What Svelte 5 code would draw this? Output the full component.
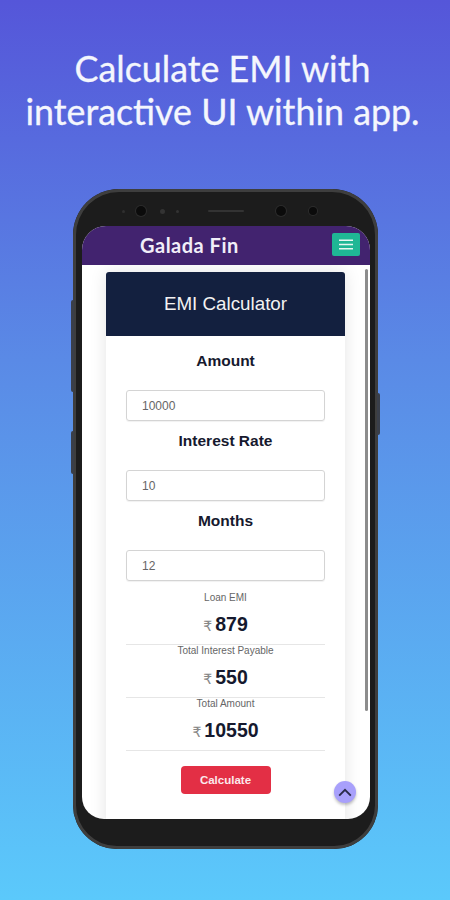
<script>
  const fields = [
    { label: 'Amount', value: '10000' },
    { label: 'Interest Rate', value: '10' },
    { label: 'Months', value: '12' }
  ];
  const results = [
    { label: 'Loan EMI', value: '879' },
    { label: 'Total Interest Payable', value: '550' },
    { label: 'Total Amount', value: '10550' }
  ];
</script>

<div class="page">
  <h1>Calculate EMI with<br />interactive UI within app.</h1>

  <div class="phone">
    <span class="side left-a"></span>
    <span class="side left-b"></span>
    <span class="side right-a"></span>

    <div class="notch">
      <span class="dot tiny"></span>
      <span class="dot cam"></span>
      <span class="dot small"></span>
      <span class="dot tiny2"></span>
      <span class="speaker"></span>
      <span class="dot cam2"></span>
      <span class="dot cam3"></span>
    </div>

    <div class="screen">
      <header class="appbar">
        <span class="brand">Galada Fin</span>
        <button class="menu" aria-label="Menu">
          <svg width="14" height="11" viewBox="0 0 14 11">
            <path d="M0 1.2H14M0 5.5H14M0 9.8H14" stroke="#e6f7f1" stroke-width="1.5" fill="none" />
          </svg>
        </button>
      </header>

      <div class="content">
        <section class="card">
          <div class="card-head">EMI Calculator</div>
          <div class="card-body">
            {#each fields as f}
              <div class="field">
                <div class="field-label">{f.label}</div>
                <div class="input">{f.value}</div>
              </div>
            {/each}

            {#each results as r}
              <div class="result">
                <div class="result-label">{r.label}</div>
                <div class="result-value"><span class="rupee">₹</span>{r.value}</div>
              </div>
            {/each}

            <button class="calc">Calculate</button>
          </div>
        </section>
        <span class="scrollbar"></span>
        <span class="to-top">
          <svg width="14" height="9" viewBox="0 0 14 9">
            <path d="M1.2 7.6L7 1.8L12.8 7.6" stroke="#2b2b4a" stroke-width="1.9" fill="none" />
          </svg>
        </span>
      </div>
    </div>
  </div>
</div>

<style>
  :global(body) {
    margin: 0;
  }
  .page {
    width: 450px;
    height: 900px;
    overflow: hidden;
    box-sizing: border-box;
    padding-top: 47px;
    background: linear-gradient(180deg, #5556d9 0%, #5a8ae6 40%, #5bc9fb 100%);
    font-family: "Liberation Sans", Arial, sans-serif;
  }
  h1 {
    margin: 0;
    height: 142px;
    padding-right: 5px;
    text-align: center;
    color: #f4f6fd;
    font-family: Lato, sans-serif;
    font-weight: 400;
    font-size: 35.8px;
    line-height: 43px;
    -webkit-text-stroke: 0.3px #f4f6fd;
  }
  .phone {
    position: relative;
    width: 305px;
    height: 660px;
    box-sizing: border-box;
    margin-left: 73px;
    background: #1c1c1c;
    border-radius: 46px 46px 44px 44px;
    box-shadow: inset 0 0 0 3px #3e3e3e;
    padding: 0 8.5px 30px;
    display: flex;
    flex-direction: column;
  }
  .side {
    position: absolute;
    width: 3px;
    background: #3a3f4a;
  }
  .left-a { left: -2px; top: 111px; height: 92px; border-radius: 2px 0 0 2px; }
  .left-b { left: -2px; top: 242px; height: 43px; border-radius: 2px 0 0 2px; }
  .right-a { right: -2px; top: 204px; height: 42px; border-radius: 0 2px 2px 0; }
  .notch {
    position: relative;
    height: 37px;
    flex: none;
  }
  .dot {
    position: absolute;
    border-radius: 50%;
    background: #0b0b0b;
  }
  .tiny { left: 40px; top: 21px; width: 3px; height: 3px; background: #2f2f2f; }
  .cam { left: 54.5px; top: 17px; width: 10px; height: 10px; box-shadow: 0 0 0 1px #2c2c2c; }
  .small { left: 78px; top: 20px; width: 5px; height: 5px; background: #333; }
  .tiny2 { left: 94px; top: 21px; width: 3px; height: 3px; background: #333; }
  .speaker {
    position: absolute;
    left: 126.5px;
    top: 21px;
    width: 36px;
    height: 2px;
    background: #333;
    border-radius: 2px;
  }
  .cam2 { left: 194.5px; top: 17px; width: 10px; height: 10px; box-shadow: 0 0 0 1px #2c2c2c; }
  .cam3 { left: 227.5px; top: 18px; width: 8px; height: 8px; box-shadow: 0 0 0 1px #2c2c2c; }
  .screen {
    flex: 1;
    min-height: 0;
    display: flex;
    flex-direction: column;
    background: #fff;
    border-radius: 24px 24px 22px 22px;
    overflow: hidden;
  }
  .appbar {
    flex: none;
    height: 39px;
    background: #42236f;
    display: flex;
    align-items: center;
    justify-content: space-between;
    padding: 0 9.5px 2px 58.5px;
    box-sizing: border-box;
  }
  .brand {
    color: #f1eef8;
    font-family: Lato, sans-serif;
    font-weight: 700;
    font-size: 20px;
    letter-spacing: 0.5px;
  }
  .menu {
    width: 28px;
    height: 23px;
    padding: 0;
    border: 0;
    border-radius: 2px;
    background: #1fb795;
    display: flex;
    align-items: center;
    justify-content: center;
  }
  .content {
    position: relative;
    flex: 1;
    min-height: 0;
    padding: 7px 24px 0 24.5px;
    overflow: hidden;
  }
  .card {
    width: 239px;
    height: 560px;
    background: #fff;
    box-shadow: 0 0 16px rgba(0, 0, 0, 0.11);
  }
  .card-head {
    height: 64px;
    background: #13203f;
    border-radius: 3px 3px 0 0;
    color: #f2f2f2;
    font-size: 18.8px;
    display: flex;
    align-items: center;
    justify-content: center;
  }
  .card-body {
    padding: 0 20px;
    display: flex;
    flex-direction: column;
  }
  .field {
    height: 80px;
    display: flex;
    flex-direction: column;
    align-items: stretch;
  }
  .field:first-child {
    height: 85px;
  }
  .field:first-child .field-label {
    height: 54px;
    padding-top: 15px;
  }
  .field-label {
    height: 49px;
    padding-top: 10px;
    box-sizing: border-box;
    line-height: 20px;
    text-align: center;
    font-size: 15.5px;
    font-weight: 700;
    color: #16192e;
  }
  .input {
    height: 31px;
    box-sizing: border-box;
    border: 1px solid #d4d4d4;
    border-radius: 3px;
    padding-left: 15px;
    font-size: 12px;
    line-height: 31px;
    color: #666;
    box-shadow: 0 1px 1px rgba(0, 0, 0, 0.06);
  }
  .result {
    height: 53px;
    box-sizing: border-box;
    border-bottom: 1px solid #e6e6e6;
    text-align: center;
  }
  .field + .result {
    height: 64px;
    padding-top: 11px;
  }
  .result-label {
    font-size: 10px;
    line-height: 12px;
    color: #666;
  }
  .result-value {
    margin-top: 8px;
    font-size: 19.5px;
    font-weight: 700;
    line-height: 24px;
    color: #15192e;
  }
  .rupee {
    font-size: 14px;
    font-weight: 400;
    color: #888;
    margin-right: 3px;
    font-family: "DejaVu Sans", sans-serif;
  }
  .calc {
    align-self: center;
    margin-top: 15px;
    width: 90px;
    height: 28px;
    border: 0;
    border-radius: 4px;
    background: #e32f45;
    color: #fbe9ec;
    font-family: "Liberation Sans", Arial, sans-serif;
    font-size: 11.5px;
    font-weight: 700;
  }
  .scrollbar {
    position: absolute;
    right: 2px;
    top: 4px;
    width: 3px;
    height: 442px;
    background: #8d8d8d;
    border-radius: 2px;
  }
  .to-top {
    position: absolute;
    left: 252.5px;
    top: 516px;
    width: 22px;
    height: 22px;
    border-radius: 50%;
    background: #a8a0fb;
    box-shadow: 0 2px 3px rgba(0, 0, 0, 0.25);
    display: flex;
    align-items: center;
    justify-content: center;
  }
</style>
